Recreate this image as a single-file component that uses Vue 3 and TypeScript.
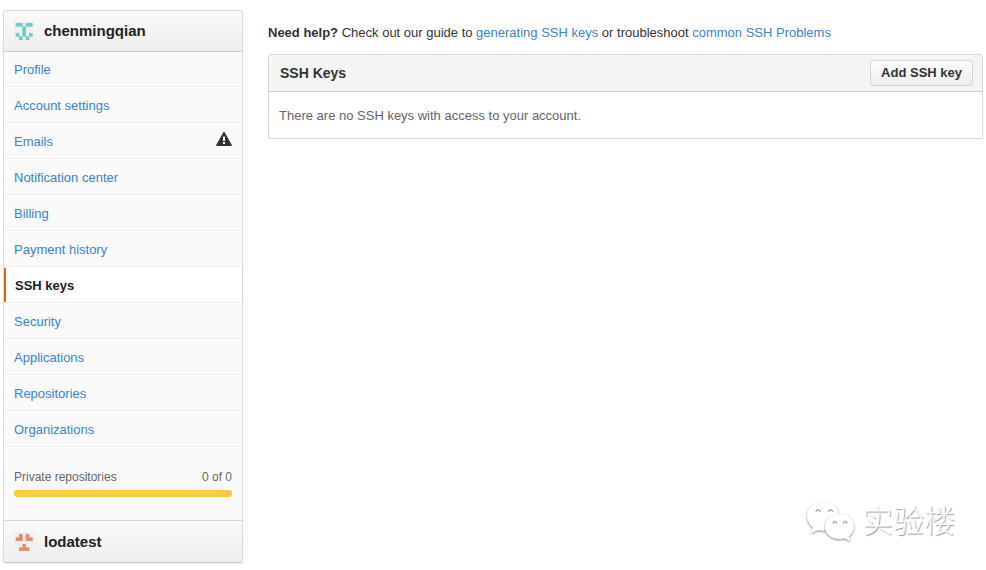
<script setup lang="ts">
interface NavItem {
  label: string
  warning?: boolean
  active?: boolean
}

interface Identicon {
  color: string
  cells: [number, number][]
}

const navItems: NavItem[] = [
  { label: 'Profile' },
  { label: 'Account settings' },
  { label: 'Emails', warning: true },
  { label: 'Notification center' },
  { label: 'Billing' },
  { label: 'Payment history' },
  { label: 'SSH keys', active: true },
  { label: 'Security' },
  { label: 'Applications' },
  { label: 'Repositories' },
  { label: 'Organizations' },
]

// Filled cells of each 5x5 avatar, as [column, row]
const userIcon: Identicon = {
  color: '#6dcdc8',
  cells: [[0, 0], [1, 0], [3, 0], [4, 0], [2, 1], [2, 2], [0, 3], [2, 3], [4, 3], [1, 4], [3, 4]],
}
const orgIcon: Identicon = {
  color: '#e0906a',
  cells: [[1, 0], [3, 0], [0, 1], [1, 1], [3, 1], [4, 1], [2, 3], [1, 4], [2, 4], [3, 4]],
}
</script>

<template>
  <div class="page">
    <aside class="sidebar">
      <header class="account">
        <svg class="avatar" viewBox="0 0 60 60" aria-hidden="true">
          <rect width="60" height="60" fill="#f0f0f0" />
          <rect v-for="([x, y], i) in userIcon.cells" :key="i" :x="5 + x * 10" :y="6 + y * 10" width="11" height="11" :fill="userIcon.color" />
        </svg>
        <span>chenmingqian</span>
      </header>
      <nav class="menu">
        <a v-for="item in navItems" :key="item.label" href="#" class="menu-item" :class="{ active: item.active }">
          <span>{{ item.label }}</span>
          <svg v-if="item.warning" class="warning" viewBox="0 1 16 16" aria-hidden="true">
            <path d="M8 1c.4 0 .6.200.8.500L15.800 14c.3.600.1 1-.6 1H.8c-.7 0-.9-.4-.6-1L7.200 1.500c.2-.3.4-.5.8-.5z" fill="#333" />
            <path d="M7 5.500h2v4.500H7zM7 11h2v2H7z" fill="#fafafa" />
          </svg>
        </a>
      </nav>
      <section class="usage">
        <div class="usage-label">
          <span>Private repositories</span>
          <span>0 of 0</span>
        </div>
        <div class="usage-bar"></div>
      </section>
      <footer class="account organization">
        <svg class="avatar" viewBox="0 0 60 60" aria-hidden="true">
          <rect width="60" height="60" fill="#f0f0f0" />
          <rect v-for="([x, y], i) in orgIcon.cells" :key="i" :x="5 + x * 10" :y="6 + y * 10" width="11" height="11" :fill="orgIcon.color" />
        </svg>
        <span>lodatest</span>
      </footer>
    </aside>

    <main class="content">
      <p class="help">
        <strong>Need help?</strong> Check out our guide to <a href="#">generating SSH keys</a> or troubleshoot
        <a href="#">common SSH Problems</a>
      </p>
      <section class="box">
        <header class="box-header">
          <h1>SSH Keys</h1>
          <button type="button">Add SSH key</button>
        </header>
        <p class="box-body">There are no SSH keys with access to your account.</p>
      </section>
    </main>

    <div class="watermark">
      <svg class="bubbles" viewBox="0 0 50 42" aria-hidden="true">
        <g fill="#fff" stroke-linejoin="round">
          <path class="bubble" d="M17 1C7.500 1 1 7 1 15c0 4.500 2.200 8.700 6 11.500l-2 6 7-3.500c2 .6 4 .8 6 .7 9-.5 15-6.500 15-14.200C33 7 26.500 1 17 1z" />
          <path class="bubble" d="M33.500 13C25 13 19 18.500 19 25.500S25 38 33.500 38c2 0 3.500-.2 5-.7l6 3-1.500-5c3.200-2.300 5-5.800 5-9.800C48 18.500 42 13 33.500 13z" />
        </g>
        <path
          fill="none"
          stroke="#999"
          stroke-width="1.200"
          stroke-linecap="round"
          d="M10 10.500c.8-2.200 3.200-2.200 4 0M22.500 10.500c.8-2.200 3.200-2.200 4 0M27 22c.8-2 2.800-2 3.500 0M37.500 22c.8-2 2.800-2 3.500 0"
        />
      </svg>
      <span>实验楼</span>
    </div>
  </div>
</template>

<style>
body {
  margin: 0;
  background: #fff;
}
</style>

<style scoped>
.page {
  display: flex;
  align-items: flex-start;
  gap: 25px;
  padding: 10px 3px 6px;
  color: #333;
  font: 13px/18px "Liberation Sans", Arial, sans-serif;
}

a {
  color: #4183c4;
  text-decoration: none;
}

.sidebar {
  flex: 0 0 240px;
  box-sizing: border-box;
  border: 1px solid #d8d8d8;
  border-bottom-color: #c8c8c8;
  border-radius: 3px;
  background: #fafafa;
  overflow: hidden;
  box-shadow: 0 1px 1px #eee;
}

.account {
  display: flex;
  align-items: center;
  gap: 10px;
  padding: 10px;
  border-bottom: 1px solid #ccc;
  background: linear-gradient(#fafafa, #eee);
  color: #222;
  font-size: 15px;
  font-weight: bold;
  line-height: 20px;
}

.organization {
  padding-top: 11px;
  border-top: 1px solid #d8d8d8;
  border-bottom: 0;
}

.avatar {
  width: 20px;
  height: 20px;
}

.menu-item {
  display: flex;
  justify-content: space-between;
  padding: 8px 10px 6px;
  border-top: 1px solid #fff;
  border-bottom: 1px solid #eee;
  line-height: 20px;
}

.menu-item:first-child {
  border-top: 0;
}

.menu-item.active {
  padding-left: 11px;
  background: #fff;
  box-shadow: inset 2px 0 #d26911;
  color: #222;
  font-weight: bold;
}

.warning {
  width: 16px;
  height: 16px;
}

.usage {
  padding: 20px 10px 23px;
  border-top: 1px solid #fff;
  color: #666;
  font-size: 12px;
}

.usage-label {
  display: flex;
  justify-content: space-between;
  margin-bottom: 4px;
}

.usage-bar {
  height: 7px;
  border-radius: 3px;
  background: #ffc644;
}

.content {
  flex: 1;
  min-width: 0;
  padding-top: 14px;
}

p,
h1 {
  margin: 0;
}

.help {
  margin-bottom: 12px;
}

.box {
  border: 1px solid #d8d8d8;
  border-radius: 3px 3px 0 0;
}

.box-header {
  display: flex;
  align-items: center;
  justify-content: space-between;
  padding: 5px 9px 5px 11px;
  border-bottom: 1px solid #ccc;
  border-radius: 2px 2px 0 0;
  background: #f4f4f4;
}

h1 {
  font-size: 14px;
  line-height: 20px;
}

button {
  padding: 3px 10px;
  border: 1px solid #d4d4d4;
  border-radius: 3px;
  background: linear-gradient(#fcfcfc, #eee);
  color: #333;
  font: bold 13px/18px "Liberation Sans", Arial, sans-serif;
}

.box-body {
  padding: 15px 10px 13px;
  color: #666;
}

.watermark {
  position: absolute;
  right: 31px;
  bottom: 23px;
  display: flex;
  align-items: center;
  gap: 6px;
  color: #fff;
  font: 300 31px/44px "Noto Sans CJK SC", sans-serif;
  text-shadow: 1px 1px 1px #999;
}

.watermark span {
  padding-bottom: 6px;
}

.bubbles {
  width: 50px;
  height: 42px;
}

.bubble {
  filter: drop-shadow(0 1px 1px #888);
}
</style>
